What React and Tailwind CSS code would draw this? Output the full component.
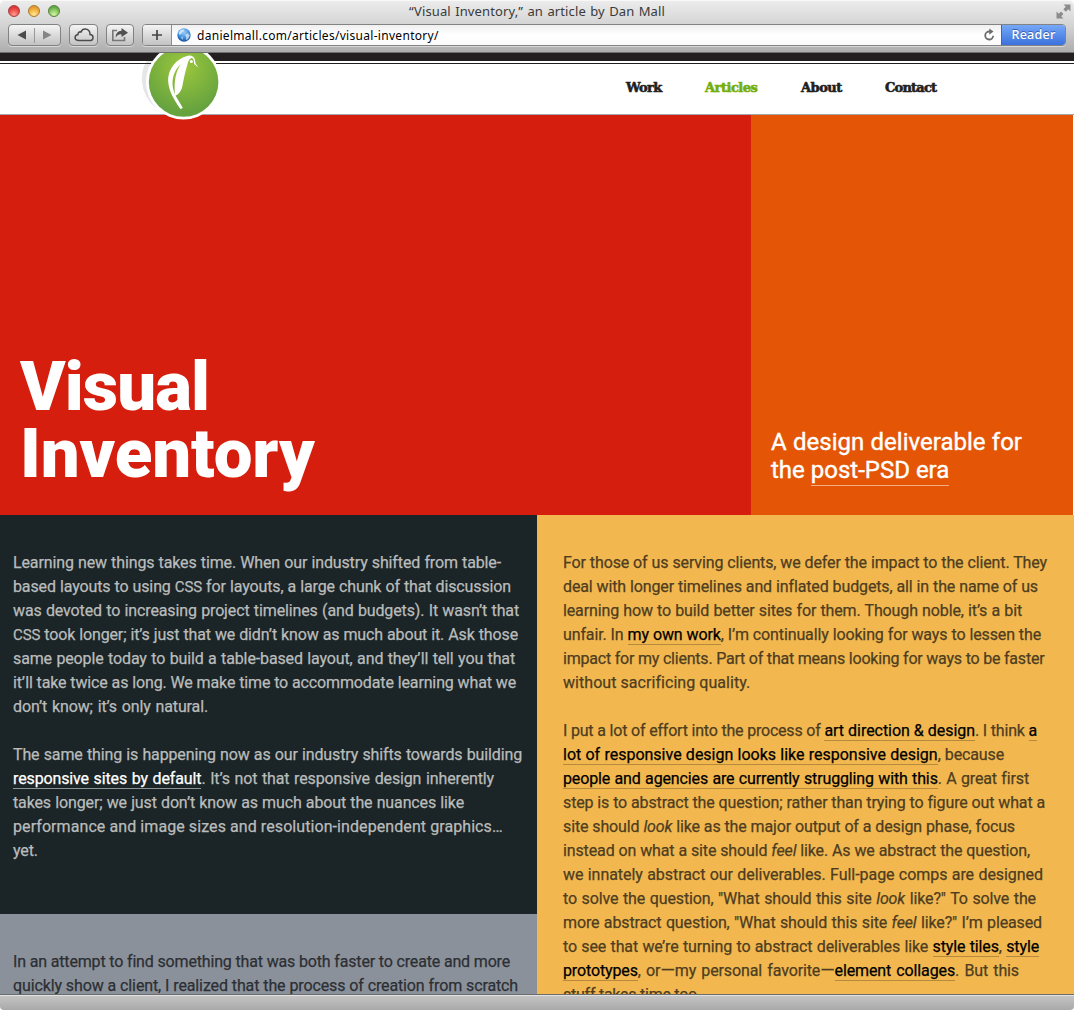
import React from "react";

const chromeFont = "font-['Noto_Sans','Open_Sans',sans-serif]";

function Line({ w, children }) {
  return (
    <span
      className="block h-6 whitespace-nowrap [text-align-last:justify]"
      style={{ width: w + "px" }}
    >
      {children}
    </span>
  );
}

function Link({ dark, children }) {
  return (
    <a
      className={
        dark
          ? "border-b border-[#8d9293] text-white"
          : "border-b border-[#b68a3c] text-black"
      }
    >
      {children}
    </a>
  );
}

function ToolButton({ className, children }) {
  return (
    <div
      className={
        "flex h-[22px] items-center justify-center rounded-[4px] border border-[#828282] bg-linear-to-b from-[#f4f4f4] to-[#c3c3c3] shadow-[0_1px_0_#d8d8d8] " +
        className
      }
    >
      {children}
    </div>
  );
}

function Globe() {
  return (
    <svg width="14" height="14" viewBox="0 0 14 14">
      <defs>
        <radialGradient id="globe" cx="50%" cy="30%" r="70%">
          <stop offset="0" stopColor="#9ccbf5" />
          <stop offset="0.6" stopColor="#3f8fdf" />
          <stop offset="1" stopColor="#174f9f" />
        </radialGradient>
      </defs>
      <circle cx="7" cy="7" r="6.7" fill="url(#globe)" />
      <path d="M1.5 4.5L4 1.5L7.5 1.6L6.6 3.4L5 4.6L4.2 6L2.4 7Z" fill="#dcecf7" opacity=".85" />
      <path d="M8 6.5L11 5.6L12.8 7.6L11 11L9 12L9.2 9.2Z" fill="#dcecf7" opacity=".75" />
      <path d="M3.5 8.5L6 9.2L5.8 12Z" fill="#cfe3f5" opacity=".7" />
    </svg>
  );
}

function Chrome() {
  return (
    <header className="flex h-[53px] flex-col rounded-t-[5px] border-b border-[#6f706f] bg-linear-to-b from-[#ededed] via-[#d3d3d3] to-[#adadad] shadow-[inset_0_1px_0_#f8f8f8]">
      <div className="flex h-[24px] items-center">
        <div className="flex w-[70px] gap-[8px] pb-[2px] pl-2">
          <i className="h-3 w-3 rounded-full border border-[#a5403c] bg-[radial-gradient(circle_at_50%_85%,#ff9d94_0%,#ef5550_45%,#d9383a_75%)]" />
          <i className="h-3 w-3 rounded-full border border-[#a87a2f] bg-[radial-gradient(circle_at_50%_85%,#ffe89a_0%,#f5b848_45%,#e29a2e_75%)]" />
          <i className="h-3 w-3 rounded-full border border-[#577f3c] bg-[radial-gradient(circle_at_50%_85%,#d3f5a8_0%,#8fcb66_45%,#63a846_75%)]" />
        </div>
        <div className="flex flex-1 justify-center pb-[2px]">
          <span className={"block w-[256px] whitespace-nowrap text-[13px] leading-5 tracking-[0.12px] text-[#3a3a3a] [text-align-last:justify] " + chromeFont}>
            “Visual Inventory,” an article by Dan Mall
          </span>
        </div>
        <div className="flex w-[70px] justify-end pb-[2px] pr-[3px]">
          <svg width="15" height="15" viewBox="0 0 15 15" fill="#8b8b8b">
            <path d="M7.5.5H14.5V7.5L12.3 5.3L9.8 7.8L7.3 5.3L9.8 2.8Z" />
            <path d="M.5 7.5L2.8 9.7L5 7.6L7.4 10L5.2 12.2L7.5 14.5H.5Z" />
          </svg>
        </div>
      </div>
      <div className="flex h-[22px] pl-2">
        <ToolButton className="mr-2 w-[53px]">
          <svg width="51" height="20" viewBox="0 0 51 20">
            <path d="M17 5.5V14.5L8.5 10Z" fill="#4b4b4b" />
            <path d="M25.5 3V18" stroke="#999" />
            <path d="M34 5.5V14.5L42.5 10Z" fill="#858585" />
          </svg>
        </ToolButton>
        <ToolButton className="mr-2 w-[29px]">
          <svg width="20" height="14" viewBox="0 0 20 14">
            <path
              d="M5 12.6H15.5C17.5 12.6 19 11.2 19 9.4C19 7.7 17.7 6.4 16 6.4C16.2 3.3 14 1.1 11.3 1.1C9.2 1.1 7.6 2.3 7 4C5.2 3.5 3.8 4.7 4 6.5C2.3 6.7 1.1 7.9 1.1 9.6C1.1 11.3 2.7 12.6 5 12.6Z"
              fill="none"
              stroke="#4b4b4b"
              strokeWidth="1.5"
            />
          </svg>
        </ToolButton>
        <ToolButton className="mr-2 w-[28px]">
          <svg width="18" height="14" viewBox="0 0 18 14">
            <path d="M6 2.5H1.8V12.5H13.5V9" fill="none" stroke="#777" strokeWidth="1.6" />
            <path d="M10.5 0L17 4.7L10.5 9V6.4C8 6.2 6.2 7 4.8 9.6C4.6 5.5 6.8 2.8 10.5 2.7Z" fill="#505050" />
          </svg>
        </ToolButton>
        <div className="flex h-[22px] w-[924px] overflow-hidden rounded-[4px] border border-[#838383] bg-linear-to-b from-[#efefef] via-white to-[#fafafa] shadow-[0_1px_0_#d8d8d8]">
          <div className="flex w-[29px] items-center justify-center border-r border-[#8f8f8f] bg-linear-to-b from-[#f4f4f4] to-[#c3c3c3]">
            <svg width="12" height="12" viewBox="0 0 12 12">
              <path d="M6 1V11M1 6H11" stroke="#444" strokeWidth="1.7" />
            </svg>
          </div>
          <div className="flex w-[25px] items-center pl-[5px]">
            <Globe />
          </div>
          <div className="flex flex-1 items-center">
            <span className={"block w-[243px] whitespace-nowrap pt-[1px] text-[12px] leading-5 tracking-[0.3px] text-black " + chromeFont}>
              danielmall.com/articles/visual-inventory/
            </span>
          </div>
          <div className="flex w-[24px] items-center pl-[6px]">
            <svg width="13" height="14" viewBox="0 0 13 14">
              <path d="M7.4 3.5H6A4 4 0 1 0 10.2 7.8" fill="none" stroke="#6c6c6c" strokeWidth="1.8" />
              <path d="M6.3 .5L10.5 3.6L6.3 6.8Z" fill="#6c6c6c" />
            </svg>
          </div>
          <div className={"flex w-[64px] items-center justify-center border-l border-[#3e68ad] bg-linear-to-b from-[#76a7f8] to-[#3b72dc] pt-[1px] text-[12.5px] font-medium tracking-[0.25px] text-white [text-shadow:0_-1px_0_#355fae] " + chromeFont}>
            Reader
          </div>
        </div>
      </div>
    </header>
  );
}

function Logo() {
  return (
    <svg width="80" height="70" viewBox="140 53 80 70" className="absolute left-[140px] top-0 z-10">
      <defs>
        <radialGradient id="leaf" cx="50%" cy="28%" r="65%">
          <stop offset="0" stopColor="#9cc73c" />
          <stop offset="1" stopColor="#66a33f" />
        </radialGradient>
      </defs>
      <path d="M152 53A37.5 37.5 0 0 0 156 108L165 60Z" fill="#333" opacity=".12" />
      <circle cx="183.6" cy="82" r="37.6" fill="#fff" />
      <circle cx="183.6" cy="82" r="34.8" fill="url(#leaf)" />
      <path
        d="M198.6 67.8C197.8 65.6 195.8 65.4 195.3 62C195.2 58.6 193.4 56 190 55.6C178 57 167.8 68 168.2 81.5C168.6 91 174.6 100.5 180.4 109L182.8 108C180.6 103.4 177.6 100 175.2 94.8C172.4 88 171.9 83 173.2 77C174.6 71.5 177.5 67 181 64C176.5 70 173.2 81 175.2 95.8C178.6 94.6 181.2 91.4 182.2 87C183.6 80 184.8 73 187 66C188 61.8 189 58.8 191.5 58C193.6 58.2 194 60.6 194 63.2C195 66 197.2 65.6 198.6 67.8Z"
        fill="#fff"
      />
      <circle cx="191.4" cy="61.4" r="1.5" fill="#fff" />
    </svg>
  );
}

function SiteNav() {
  const item = "block whitespace-nowrap ";
  return (
    <div className="relative h-[62px] border-b border-[#a3a7ab] bg-white">
      <div className="h-2 bg-[#231f20]" />
      <div className="mt-[2px] h-px bg-[#231f20]" />
      <Logo />
      <nav className="flex pl-[626px] pt-[14px] font-['DejaVu_Serif',serif] text-[13px] font-bold leading-5 tracking-[-0.8px] text-[#231f20] [-webkit-text-stroke:0.6px_currentColor]">
        <a className={item + "w-[79px] tracking-[-0.6px]"}>Work</a>
        <a className={item + "w-[96px] tracking-[-0.5px] text-[#73ae0c]"}>Articles</a>
        <a className={item + "w-[84px] tracking-[-0.5px]"}>About</a>
        <a className={item + "w-[54px]"}>Contact</a>
      </nav>
    </div>
  );
}

function Hero() {
  return (
    <section className="flex h-[400px] text-white">
      <div className="flex w-[751px] flex-col justify-end bg-[#d51e0d] pb-[28px] pl-[20px]">
        <h1 className="font-['Roboto',sans-serif] text-[69px] font-black leading-[67px]">
          <span className="block tracking-[-0.9px]">Visual</span>
          <span className="block tracking-[-0.1px]">Inventory</span>
        </h1>
      </div>
      <div className="flex w-[322px] flex-col justify-end bg-[#e45605] pb-[31px] pl-[20px]">
        <p className="font-['Roboto',sans-serif] text-[24px] leading-[28px] [-webkit-text-stroke:0.4px_currentColor]">
          <span className="block w-[251px] whitespace-nowrap [text-align-last:justify]">A design deliverable for</span>
          <span className="block w-[178px] whitespace-nowrap [text-align-last:justify]">
            the <a className="border-b border-[#f2ab82] pb-[1px]">post-PSD era</a>
          </span>
        </p>
      </div>
    </section>
  );
}

function LeftColumn() {
  return (
    <div className="w-[537px]">
      <div className="flex h-[399px] flex-col gap-6 bg-[#1b2426] pl-[13px] pt-[36px] text-[#b9bcbc]">
        <p>
          <Line w={488}>Learning new things takes time. When our industry shifted from table-</Line>
          <Line w={498}>based layouts to using <span className="text-[15px]">CSS</span> for layouts, a large chunk of that discussion</Line>
          <Line w={506}>was devoted to increasing project timelines (and budgets). It wasn’t that</Line>
          <Line w={505}><span className="text-[15px]">CSS</span> took longer; it’s just that we didn’t know as much about it. Ask those</Line>
          <Line w={502}>same people today to build a table-based layout, and they’ll tell you that</Line>
          <Line w={503}>it’ll take twice as long. We make time to accommodate learning what we</Line>
          <Line w={195}>don’t know; it’s only natural.</Line>
        </p>
        <p>
          <Line w={509}>The same thing is happening now as our industry shifts towards building</Line>
          <Line w={481}><Link dark>responsive sites by default</Link>. It’s not that responsive design inherently</Line>
          <Line w={451}>takes longer; we just don’t know as much about the nuances like</Line>
          <Line w={488}><span className="tracking-[0.08px]">performance and image sizes and resolution-independent graphics…</span></Line>
          <Line w={27}>yet.</Line>
        </p>
      </div>
      <div className="h-[80px] bg-[#8b919a] pl-[13px] pt-[36px] text-[#2c2f34]">
        <p>
          <Line w={497}><span className="tracking-[-0.16px]">In an attempt to find something that was both faster to create and more</span></Line>
          <Line w={505}>quickly show a client, I realized that the process of creation from scratch</Line>
        </p>
      </div>
    </div>
  );
}

function RightColumn() {
  return (
    <div className="flex flex-1 flex-col gap-6 bg-[#f2b84f] pl-[26px] pt-[36px] text-[#4e3d1f]">
      <p>
        <Line w={484}>For those of us serving clients, we defer the impact to the client. They</Line>
        <Line w={475}>deal with longer timelines and inflated budgets, all in the name of us</Line>
        <Line w={459}>learning how to build better sites for them. Though noble, it’s a bit</Line>
        <Line w={478}>unfair. In <Link>my own work</Link>, I’m continually looking for ways to lessen the</Line>
        <Line w={481}><span className="tracking-[-0.21px]">impact for my clients. Part of that means looking for ways to be faster</span></Line>
        <Line w={185}><span className="tracking-[0.05px]">without sacrificing quality.</span></Line>
      </p>
      <p>
        <Line w={474}><span className="tracking-[-0.22px]">I put a lot of effort into the process of <Link><span className="tracking-[-0.05px]">art direction &amp; design</span></Link>. I think <Link>a</Link></span></Line>
        <Line w={441}><Link><span className="tracking-[0px]">lot of responsive design looks like responsive design</span></Link>, because</Line>
        <Line w={466}><Link>people and agencies are currently struggling with this</Link>. A great first</Line>
        <Line w={482}>step is to abstract the question; rather than trying to figure out what a</Line>
        <Line w={452}>site should <em>look</em> like as the major output of a design phase, focus</Line>
        <Line w={467}>instead on what a site should <em>feel</em> like. As we abstract the question,</Line>
        <Line w={480}><span className="tracking-[-0.05px]">we innately abstract our deliverables. Full-page comps are designed</span></Line>
        <Line w={473}>to solve the question, "What should this site <em>look</em> like?" To solve the</Line>
        <Line w={479}>more abstract question, "What should this site <em>feel</em> like?" I’m pleased</Line>
        <Line w={476}>to see that we’re turning to abstract deliverables like <Link>style tiles</Link>, <Link>style</Link></Line>
        <Line w={456}><Link>prototypes</Link>, or<span className="text-[18.5px] leading-4">—</span>my personal favorite<span className="text-[18.5px] leading-4">—</span><Link>element collages</Link>. But this</Line>
        <Line w={134}><span className="tracking-[-0.25px]">stuff takes time too.</span></Line>
      </p>
    </div>
  );
}

export default function App() {
  return (
    <div className="flex h-[1010px] w-[1074px] flex-col overflow-hidden bg-white">
      <Chrome />
      <main className="flex h-[941px] flex-col overflow-hidden">
        <SiteNav />
        <Hero />
        <section className="flex h-[479px] overflow-hidden font-['Roboto',sans-serif] text-[16px] leading-6 tracking-[-0.13px] [-webkit-text-stroke:0.25px_currentColor]">
          <LeftColumn />
          <RightColumn />
        </section>
      </main>
      <footer className="h-[16px] rounded-b-[4px] border-t border-[#6c6c6c] bg-linear-to-b from-[#c6c6c6] to-[#a9a9a9] shadow-[inset_0_1px_0_#e2e2e2]" />
    </div>
  );
}
